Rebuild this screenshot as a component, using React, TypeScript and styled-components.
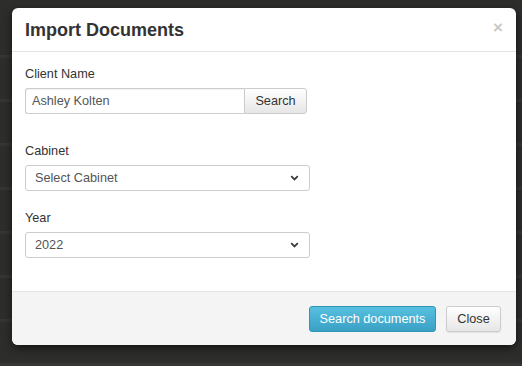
import React from 'react';
import styled, { createGlobalStyle } from 'styled-components';

const GlobalStyle = createGlobalStyle`
  html, body {
    margin: 0;
    padding: 0;
    background: #2e2f2d;
    font-family: 'Liberation Sans', Arial, sans-serif;
  }
`;

const Chevron = () => (
  <svg width="9" height="6" viewBox="0 0 9 6">
    <path d="M1.2 1.2 L4.5 4.4 L7.8 1.2" fill="none" stroke="#3a3a3a" strokeWidth="1.8" />
  </svg>
);

const App = () => {
  return (
    <>
      <GlobalStyle />
      <Backdrop>
        <Modal>
          <Header>
            <Title>Import Documents</Title>
            <CloseX>×</CloseX>
          </Header>
          <Body>
            <Label>Client Name</Label>
            <InputGroup>
              <TextInput defaultValue="Ashley Kolten" />
              <AddonButton>Search</AddonButton>
            </InputGroup>

            <Label $spaced="29px">Cabinet</Label>
            <SelectBox>
              <span>Select Cabinet</span>
              <Chevron />
            </SelectBox>

            <Label $spaced="19px">Year</Label>
            <SelectBox>
              <span>2022</span>
              <Chevron />
            </SelectBox>
          </Body>
          <Footer>
            <PrimaryButton>Search documents</PrimaryButton>
            <DefaultButton>Close</DefaultButton>
          </Footer>
        </Modal>
      </Backdrop>
    </>
  );
};

const Backdrop = styled.div`
  width: 522px;
  height: 366px;
  box-sizing: border-box;
  padding: 8px 0 0 12px;
  overflow: hidden;
  background: repeating-linear-gradient(
    to bottom,
    #2d2e2c 0px,
    #2d2e2c 41px,
    #353634 41px,
    #353634 44px
  );
  background-position: 0 14px;
`;

const Modal = styled.div`
  width: 504px;
  background: #fff;
  border-radius: 6px;
  box-shadow: 0 3px 9px rgba(0, 0, 0, 0.6);
  overflow: hidden;
`;

// Header
const Header = styled.div`
  display: flex;
  justify-content: space-between;
  align-items: center;
  height: 43px;
  padding: 0 13px 0 13px;
  border-bottom: 1px solid #e5e5e5;
`;

const Title = styled.h4`
  margin: 0;
  font-size: 18px;
  font-weight: bold;
  color: #333;
  padding-top: 1px;
`;

const CloseX = styled.span`
  font-size: 17px;
  font-weight: bold;
  color: #c8c8c8;
  margin-top: -4px;
  line-height: 1;
`;

// Body
const Body = styled.div`
  display: flex;
  flex-direction: column;
  align-items: flex-start;
  padding: 14px 13px 33px 13px;
`;

const Label = styled.label<{ $spaced?: string }>`
  display: block;
  font-size: 12.7px;
  line-height: 17px;
  color: #333;
  margin-top: ${({ $spaced }) => $spaced || '0'};
  margin-bottom: 5px;
`;

const InputGroup = styled.div`
  display: flex;
  height: 26px;
`;

const TextInput = styled.input`
  box-sizing: border-box;
  width: 219px;
  height: 26px;
  padding: 0 6px;
  border: 1px solid #ccc;
  border-right: none;
  border-radius: 3px 0 0 3px;
  font-family: inherit;
  font-size: 12.7px;
  color: #555;
  outline: none;
  box-shadow: inset 0 1px 1px rgba(0, 0, 0, 0.05);
`;

const AddonButton = styled.button`
  box-sizing: border-box;
  width: 63px;
  height: 26px;
  border: 1px solid #ccc;
  border-radius: 0 3px 3px 0;
  background: linear-gradient(to bottom, #fff 0%, #e6e6e6 100%);
  font-family: inherit;
  font-size: 12.7px;
  color: #333;
  padding: 0;
`;

const SelectBox = styled.div`
  box-sizing: border-box;
  width: 285px;
  height: 26px;
  display: flex;
  align-items: center;
  justify-content: space-between;
  padding: 0 10px 0 9px;
  border: 1px solid #ccc;
  border-radius: 3px;
  font-size: 12.7px;
  color: #555;
  background: #fff;
`;

// Footer
const Footer = styled.div`
  display: flex;
  justify-content: flex-end;
  align-items: center;
  gap: 10px;
  height: 53px;
  padding: 0 15px 0 0;
  border-top: 1px solid #e5e5e5;
  background: #f4f4f4;
`;

const PrimaryButton = styled.button`
  box-sizing: border-box;
  height: 26px;
  width: 127px;
  padding: 0;
  border: 1px solid #2f96b4;
  border-radius: 3px;
  background: linear-gradient(to bottom, #57bfdf 0%, #3aa1c6 100%);
  color: #fff;
  font-family: inherit;
  font-size: 12.7px;
`;

const DefaultButton = styled.button`
  box-sizing: border-box;
  height: 26px;
  width: 55px;
  padding: 0;
  border: 1px solid #ccc;
  border-radius: 3px;
  background: linear-gradient(to bottom, #fff 0%, #e6e6e6 100%);
  color: #333;
  font-family: inherit;
  font-size: 12.7px;
  box-shadow: 0 1px 1px rgba(0, 0, 0, 0.08);
`;

export default App;
